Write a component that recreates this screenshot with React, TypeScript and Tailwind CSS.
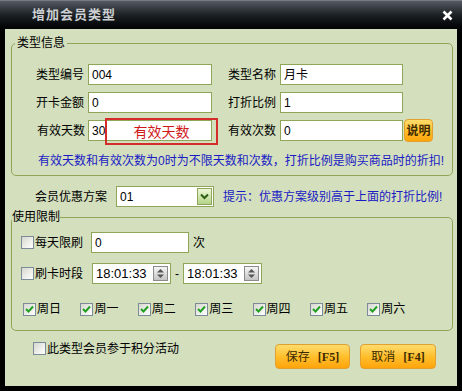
import React from "react";

// small text field with olive border
const Field = ({ value, className = "" }: { value: string; className?: string }) => (
  <div
    className={`h-[21px] bg-white border border-[#8fa659] flex items-center pl-[3px] text-[12px] leading-[14px] text-black shrink-0 ${className}`}
  >
    {value}
  </div>
);

const Check = ({ checked = false }: { checked?: boolean }) => (
  <span className="w-[13px] h-[13px] border border-[#7b8b98] bg-linear-to-br from-[#d8d8d0] to-white flex items-center justify-center shrink-0">
    {checked && (
      <svg width="9" height="8" viewBox="0 0 9 8">
        <path d="M1 4 L3.5 6.5 L8 1.5" stroke="#22a022" strokeWidth="2" fill="none" />
      </svg>
    )}
  </span>
);

const TimeField = ({ value }: { value: string }) => (
  <div className="w-[79px] h-[21px] bg-white border border-[#8fa659] flex items-center justify-between pl-[3px] pr-[2px] text-[13px] text-black shrink-0">
    <span>{value}</span>
    <span className="w-[15px] h-[15px] border border-[#8b8b8b] bg-linear-to-b from-[#f6f6f6] to-[#c4c4c4] flex items-center justify-center">
      <svg width="9" height="11" viewBox="0 0 9 11">
        <path d="M4.5 1 L8 4.5 L1 4.5 Z" fill="#555" />
        <path d="M1 6.5 L8 6.5 L4.5 10 Z" fill="#555" />
      </svg>
    </span>
  </div>
);

const OrangeButton = ({ children, className = "" }: { children: React.ReactNode; className?: string }) => (
  <button
    className={`flex items-center justify-center border border-[#e2a030] rounded-[4px] bg-linear-to-b from-[#ffdc6a] via-[#ffbf2a] to-[#ffa408] text-[#3d2b00] text-[12px] leading-[14px] shrink-0 ${className}`}
  >
    {children}
  </button>
);

const days = ["周日", "周一", "周二", "周三", "周四", "周五", "周六"];

export default function App() {
  return (
    <div className="w-[462px] h-[391px] bg-black font-['Liberation_Sans','Noto_Sans_CJK_SC',sans-serif] text-black overflow-hidden">
      {/* title bar */}
      <div className="h-[29px] flex items-center justify-between pl-[32px] pr-[9px] bg-linear-to-b from-[#555b62] via-[#1c2125] to-[#020304] border-t border-[#777c82]">
        <span className="text-[13px] font-bold text-[#cdd0d2] tracking-[1px]">增加会员类型</span>
        <svg width="11" height="11" viewBox="0 0 11 11">
          <path d="M1.5 1.5 L9.5 9.5 M9.5 1.5 L1.5 9.5" stroke="#fff" strokeWidth="2.6" />
        </svg>
      </div>

      <div className="mx-[5px] h-[357px] bg-[#d3dfbd] pt-[6px] pl-[6px] pr-[4px] text-[12px] leading-[16px]">
        {/* 类型信息 */}
        <fieldset className="border border-[#8fa659] rounded-[5px] pb-[6px]">
          <legend className="ml-[3px] px-[2px] text-[12px] leading-[16px]">类型信息</legend>
          <div className="flex flex-col gap-[7px] pt-[13px]">
            <div className="flex items-center h-[21px]">
              <span className="w-[76px] pr-[4px] text-right shrink-0">类型编号</span>
              <Field value="004" className="w-[124px]" />
              <span className="w-[68px] pr-[4px] text-right shrink-0">类型名称</span>
              <Field value="月卡" className="w-[123px]" />
            </div>
            <div className="flex items-center h-[21px]">
              <span className="w-[76px] pr-[4px] text-right shrink-0">开卡金额</span>
              <Field value="0" className="w-[124px]" />
              <span className="w-[68px] pr-[4px] text-right shrink-0">打折比例</span>
              <Field value="1" className="w-[123px]" />
            </div>
            <div className="flex items-center h-[21px]">
              <span className="w-[76px] pr-[3px] text-right shrink-0">有效天数</span>
              <div className="relative">
                <Field value="30" className="w-[124px]" />
                <div className="absolute left-[17px] top-[-2px] w-[113px] h-[27px] border-2 border-[#d42b2b] flex items-center justify-center text-[14px] text-[#d01818]">
                  有效天数
                </div>
              </div>
              <span className="w-[68px] pr-[4px] text-right shrink-0">有效次数</span>
              <Field value="0" className="w-[123px]" />
              <OrangeButton className="ml-[1px] w-[29px] h-[23px] rounded-[3px] font-bold">说明</OrangeButton>
            </div>
          </div>
          <div className="mt-[12px] pl-[26px] whitespace-nowrap text-[#1a1ac4]">
            有效天数和有效次数为0时为不限天数和次数，打折比例是购买商品时的折扣!
          </div>
        </fieldset>

        {/* 优惠方案 */}
        <div className="flex items-center h-[21px] mt-[10px]">
          <span className="w-[105px] pr-[9px] text-right shrink-0">会员优惠方案</span>
          <div className="w-[98px] h-[21px] bg-white border border-[#8fa659] flex items-center justify-between pl-[3px] pr-[1px] shrink-0">
            <span>01</span>
            <span className="w-[15px] h-[17px] border border-[#8fa659] bg-linear-to-b from-[#f0f8d8] to-[#b4d488] flex items-center justify-center">
              <svg width="11" height="9" viewBox="0 0 11 9">
                <path d="M2 2.5 L5.5 6 L9 2.5" stroke="#2d5e16" strokeWidth="2" fill="none" />
              </svg>
            </span>
          </div>
          <span className="ml-[9px] whitespace-nowrap text-[#1a1ac4]">提示：优惠方案级别高于上面的打折比例!</span>
        </div>

        {/* 使用限制 */}
        <fieldset className="mt-[2px] border border-[#8fa659] rounded-[5px] pb-[11px]">
          <legend className="text-[12px] leading-[16px]">使用限制</legend>
          <div className="pt-[7px] pl-[9px] flex flex-col">
            <div className="flex items-center h-[21px]">
              <Check />
              <span className="w-[57px] pl-[1px] shrink-0">每天限刷</span>
              <Field value="0" className="w-[98px]" />
              <span className="ml-[4px]">次</span>
            </div>
            <div className="flex items-center h-[21px] mt-[10px]">
              <Check />
              <span className="w-[58px] pl-[1px] shrink-0">刷卡时段</span>
              <TimeField value="18:01:33" />
              <span className="w-[12px] text-center">-</span>
              <TimeField value="18:01:33" />
            </div>
            <div className="flex items-center h-[20px] mt-[15px] ml-[2px]">
              {days.map((d) => (
                <div key={d} className="w-[57.4px] flex items-center gap-[1px] shrink-0">
                  <Check checked />
                  <span>{d}</span>
                </div>
              ))}
            </div>
          </div>
        </fieldset>

        {/* footer */}
        <div className="flex items-start mt-[11px]">
          <div className="flex items-center h-[13px] pl-[22px] gap-[1px] w-[264px] shrink-0">
            <Check />
            <span className="whitespace-nowrap">此类型会员参于积分活动</span>
          </div>
          <OrangeButton className="mt-[2px] w-[75px] h-[25px] gap-[8px]">
            <span>保存</span>
            <span className="font-['Liberation_Serif',serif] font-bold">[F5]</span>
          </OrangeButton>
          <OrangeButton className="mt-[2px] ml-[10px] w-[76px] h-[25px] gap-[8px]">
            <span>取消</span>
            <span className="font-['Liberation_Serif',serif] font-bold">[F4]</span>
          </OrangeButton>
        </div>
      </div>
    </div>
  );
}
